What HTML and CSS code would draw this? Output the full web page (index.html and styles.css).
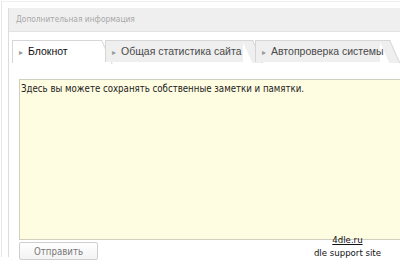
FILE: index.html
```html
<!DOCTYPE html>
<html lang="ru">
<head>
  <meta charset="UTF-8" />
  <title>Блокнот</title>
  <link rel="stylesheet" href="styles.css">
</head>
<body>
  <div class="frame">
    <div class="panel">
      <div class="panel-head">Дополнительная информация</div>
      <div class="tabs">
        <div class="tab active t1"><span class="arrow">&#9656;</span>Блокнот</div>
        <div class="tab t2"><span class="arrow">&#9656;</span>Общая статистика сайта</div>
        <div class="tab t3"><span class="arrow">&#9656;</span>Автопроверка системы</div>
      </div>
      <div class="tab-body">
        <div class="note">Здесь вы можете сохранять собственные заметки и памятки.</div>
        <div class="footer">
          <button class="send">Отправить</button>
          <div class="mark">
            <a href="#">4dle.ru</a>
            <span>dle support site</span>
          </div>
        </div>
      </div>
    </div>
  </div>
</body>
</html>
```

FILE: styles.css
```css
body {
  margin: 0;
  background: #fff;
  font-family: 'DejaVu Sans Condensed', 'DejaVu Sans', sans-serif;
  height: 264px;
  overflow: hidden;
}

.frame {
  margin: 1px 0 0 1px;
  padding: 6px 0 0 6px;
  border-left: 1px solid #e6e6e6;
  border-top: 1px solid #efefef;
  height: 256px;
  box-sizing: border-box;
}

.panel {
  border-left: 1px solid #dcdcdc;
  height: 100%;
}

.panel-head {
  background: #efefef;
  border-bottom: 1px solid #e2e2e2;
  height: 23px;
  line-height: 23px;
  padding-left: 7px;
  font-size: 8.3px;
  color: #a8a8a8;
}

.tabs {
  display: flex;
  padding: 8px 0 0 3px;
  height: 22px;
}

.tab {
  position: relative;
  flex-shrink: 0;
  box-sizing: border-box;
  white-space: nowrap;
  height: 22px;
  line-height: 21px;
  padding-left: 6px;
  background: #efefef;
  border-left: 1px solid #d6d6d6;
  border-top: 1px solid #d6d6d6;
  font-family: 'Liberation Sans', Arial, sans-serif;
  font-size: 10.5px;
  color: #4a4a4a;
  margin-right: 12px;
}

.tab::after {
  content: '';
  position: absolute;
  top: -1px;
  right: -10px;
  width: 10px;
  height: 22px;
  background: inherit;
  border-top: 1px solid #d6d6d6;
  border-right: 1px solid #d6d6d6;
  transform: skewX(24deg);
  transform-origin: top left;
}

.t1 { width: 80px; margin-right: 13px; }
.t2 { width: 138px; }
.t3 { width: 125px; }

.tab.active {
  background: #fff;
  color: #111;
  height: 23px;
}

.tab.active::after {
  height: 23px;
}

.arrow {
  font-size: 8px;
  color: #999;
  margin-right: 5px;
}

.tab-body {
  padding: 17px 0 0 10px;
}

.note {
  height: 153px;
  background: #fffde1;
  border: 1px solid #d0d0c0;
  border-right: none;
  padding: 3px 1px;
  font-size: 9.6px;
  color: #222;
}

.footer {
  display: flex;
  justify-content: space-between;
  align-items: flex-start;
}

.send {
  margin-top: 2px;
  width: 79px;
  height: 18px;
  padding: 0;
  background: linear-gradient(#fff, #f3f3f3);
  border: 1px solid #cfcfcf;
  border-radius: 2px;
  font-family: 'DejaVu Sans Condensed', 'DejaVu Sans', sans-serif;
  font-size: 9.6px;
  color: #777;
}

.mark {
  display: flex;
  flex-direction: column;
  align-items: center;
  margin-right: 19px;
  margin-top: -6px;
  font-family: 'DejaVu Sans', sans-serif;
  font-size: 8.6px;
  line-height: 13px;
  color: #111;
}

.mark a {
  color: #111;
}
```
